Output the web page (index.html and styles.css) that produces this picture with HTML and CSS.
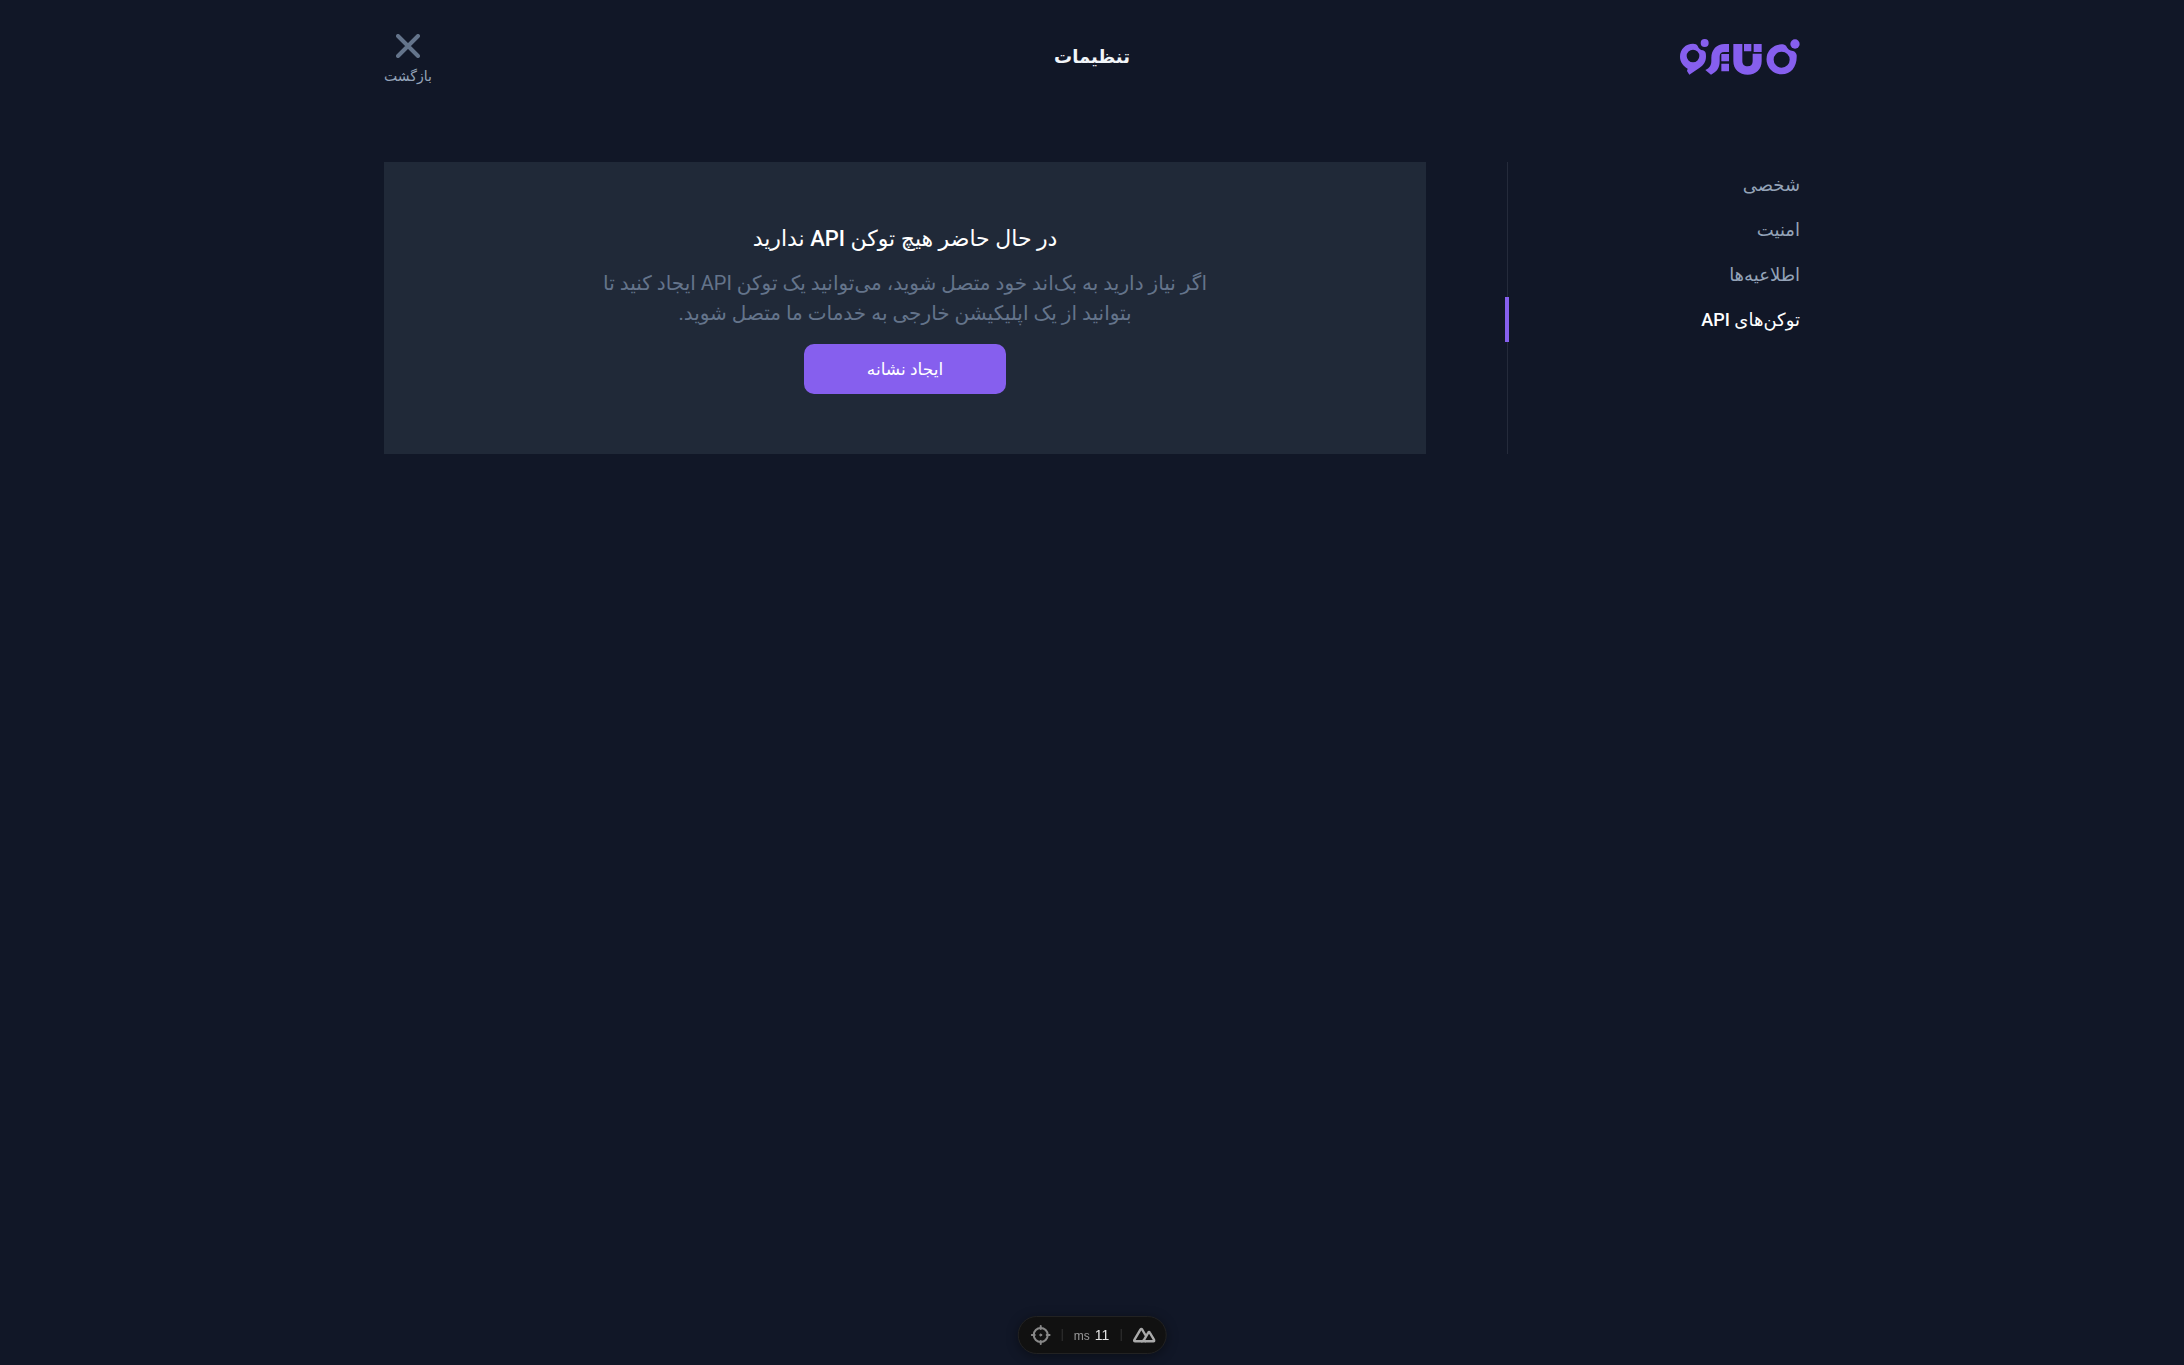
FILE: index.html
```html
<!DOCTYPE html>
<html lang="fa" dir="rtl">
<head>
<meta charset="utf-8">
<meta name="viewport" content="width=device-width, initial-scale=1">
<title>تنظیمات</title>
<link rel="stylesheet" href="styles.css">
</head>
<body>
<div class="page">
  <header class="header">
    <a class="logo" href="#" aria-label="صفحه اصلی">
      <svg viewBox="60 54 360 114" width="120" height="38" fill="currentColor" aria-hidden="true">
        <circle cx="405" cy="72" r="14"/>
        <path fill-rule="evenodd" d="M364 73c5 0 10 1 14 4 4 9 11 15 21 16 6 2 9 6 11 12 2 33-16 58-45 58a45 45 0 0 1-1-90zM365 95a24 24 0 1 0 0 48 24 24 0 0 0 0-48z"/>
        <path d="M220 72h27v51c0 10 6 16 16 16s15-6 15-16v-22h27v22c0 25-17 41-42 41s-43-16-43-41z"/>
        <path d="M252 72h22v22h-22zM281 72h24v24h-24zM184 102h23v22h-23zM184 131h23v23h-23z"/>
        <path d="M207 72v24h-14c-10 0-14 5-14 14v14c0 20-9 32-26 40l-17-14c12-6 18-13 18-28v-8c0-25 16-42 40-42z"/>
        <circle cx="134" cy="69" r="12"/>
        <path fill-rule="evenodd" d="M99 71c7 0 12 2 14 7 3 8 8 12 16 13 8 3 9 8 9 18 0 18-8 27-19 34l-31 21-7-11 2-7c-13-8-23-20-23-36 0-23 17-39 39-39zM99 89a19 19 0 1 0 0 38 19 19 0 0 0 0-38z"/>
      </svg>
    </a>
    <h1 class="title">تنظیمات</h1>
    <a class="back" href="#">
      <svg viewBox="0 0 24 24" width="24" height="24" fill="none" stroke="currentColor" stroke-width="4" stroke-linecap="round" aria-hidden="true"><path d="M2 2l20 20M22 2L2 22"/></svg>
      <span class="back-label">بازگشت</span>
    </a>
  </header>
  <div class="content">
    <nav class="menu">
      <a class="menu-item" href="#">شخصی</a>
      <a class="menu-item" href="#">امنیت</a>
      <a class="menu-item" href="#">اطلاعیه‌ها</a>
      <a class="menu-item active" href="#" aria-current="page">توکن‌های API</a>
    </nav>
    <main class="card">
      <h2 class="card-title">در حال حاضر هیچ توکن API ندارید</h2>
      <p class="card-text">اگر نیاز دارید به بک‌اند خود متصل شوید، می‌توانید یک توکن API ایجاد کنید تا<br>بتوانید از یک اپلیکیشن خارجی به خدمات ما متصل شوید.</p>
      <button class="create" type="button">ایجاد نشانه</button>
    </main>
  </div>
</div>
<div class="devtools" dir="ltr">
  <button class="tool" type="button" aria-label="Inspector">
    <svg viewBox="0 0 20 20" width="20" height="20" fill="none" stroke="currentColor" stroke-width="2" stroke-linecap="round" aria-hidden="true"><circle cx="10" cy="10" r="7"/><path d="M10 1v3M10 16v3M1 10h3M16 10h3"/><circle cx="10" cy="10" r="1" fill="currentColor" stroke-width="1"/></svg>
  </button>
  <span class="divider"></span>
  <span class="timing"><small class="unit">ms</small><span>11</span></span>
  <span class="divider"></span>
  <button class="tool nuxt" type="button" aria-label="DevTools">
    <svg viewBox="0 0 24 16" width="23" height="16" fill="none" stroke="currentColor" stroke-width="2.500" stroke-linejoin="round" stroke-linecap="round" aria-hidden="true"><path d="M13 14.500H2.500Q1 14.500 1.700 13L8 2.500Q9 1 10 2.500L13.200 8"/><path d="M13.500 14.500H21.500Q23 14.500 22.300 13L17.800 5.500Q17 4 16.200 5.500L11.800 13Q11 14.500 9.500 14.500"/></svg>
  </button>
</div>
</body>
</html>
```
FILE: styles.css
```css
* { box-sizing: border-box; }
body {
  margin: 0;
  min-height: 100vh;
  background: #111727;
  color: #fff;
  font-family: Roboto, "DejaVu Sans", sans-serif;
}
a { color: inherit; text-decoration: none; }
button { font: inherit; color: inherit; border: 0; padding: 0; background: none; cursor: pointer; }
.page { width: 100%; max-width: 1464px; margin: 0 auto; padding: 0 24px; }
.header {
  display: grid;
  grid-template-columns: 1fr auto 1fr;
  align-items: center;
  height: 114px;
}
.logo { justify-self: start; color: #865fee; }
.logo svg { display: block; }
.title { margin: 0; font-size: 18px; line-height: 28px; font-weight: 700; color: #f1f5f9; }
.back {
  justify-self: end;
  display: flex;
  flex-direction: column;
  align-items: center;
  gap: 8px;
  padding-top: 6px;
  color: #64748b;
}
.back svg { display: block; }
.back-label { font-size: 14px; line-height: 20px; color: #94a3b8; }
.content {
  display: grid;
  grid-template-columns: 293px 1fr;
  gap: 81px;
  margin-top: 48px;
}
.menu { border-left: 1px solid #252b3b; display: flex; flex-direction: column; }
.menu-item {
  font-size: 18px;
  line-height: 45px;
  color: #94a3b8;
  border-left: 4px solid transparent;
  margin-left: -3px;
}
.active { color: #fff; border-color: #865fee; font-weight: 500; }
.card {
  display: flex;
  flex-direction: column;
  align-items: center;
  background: #202938;
  padding: 60px;
  text-align: center;
}
.card-title { margin: 0 0 12px; font-size: 22px; line-height: 34px; font-weight: 500; }
.card-text { margin: 0 0 16px; font-size: 20px; line-height: 30px; color: #64748b; }
.create {
  width: 202px;
  height: 50px;
  border-radius: 10px;
  background: #865fee;
  font-size: 17px;
  font-weight: 500;
}
.devtools {
  position: fixed;
  bottom: 11px;
  left: 50%;
  transform: translateX(-50%);
  display: flex;
  align-items: center;
  height: 38px;
  padding: 0 10px 0 12px;
  border: 1px solid #222;
  border-radius: 19px;
  background: #111;
  color: #e5e5e5;
  box-shadow: 0 2px 12px #0006;
  font: 14px/20px "Liberation Sans", sans-serif;
}
.tool { display: flex; color: #888; }
.nuxt { color: #aaa; }
.divider { width: 1px; height: 12px; margin: 0 11px; background: #333; }
.timing { display: flex; align-items: baseline; gap: 5px; }
.unit { font-size: 12px; color: #999; }
```
